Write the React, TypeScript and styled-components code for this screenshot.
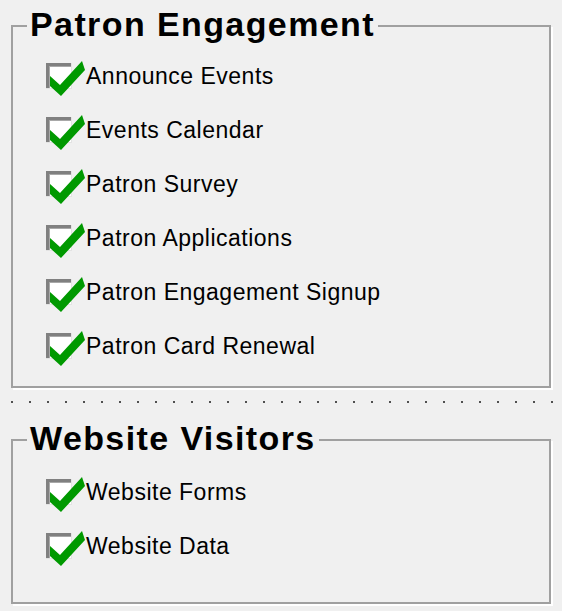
import React from 'react';
import styled, { createGlobalStyle } from 'styled-components';

const GlobalStyle = createGlobalStyle`
  html, body {
    margin: 0;
    padding: 0;
    background: #f0f0f0;
  }
  body {
    font-family: "Liberation Sans", Arial, sans-serif;
    color: #000;
  }
`;

const Page = styled.div`
  width: 562px;
  height: 611px;
  padding: 9px 11px 0;
  box-sizing: border-box;
  overflow: hidden;
`;

const Group = styled.fieldset<{ $padTop: number; $padBottom: number }>`
  margin: 0;
  width: 540px;
  box-sizing: border-box;
  border: 2px solid #a0a0a0;
  box-shadow: 2px 2px 0 #ffffff;
  padding: ${p => p.$padTop}px 0 ${p => p.$padBottom}px 31px;
  min-width: 0;
`;

// the legend sits at the fieldset's left padding, so pull it back
const Title = styled.legend`
  margin-left: -17px;
  padding: 0 3px 4px;
  font-family: "Liberation Sans", Arial, sans-serif;
  font-weight: bold;
  font-size: 34px;
  line-height: 30px;
  letter-spacing: 1.4px;
  color: #000;
`;

const Row = styled.div`
  display: flex;
  align-items: center;
  height: 54px;
`;

const Label = styled.span`
  font-size: 23px;
  letter-spacing: 0.5px;
  line-height: 1;
  color: #000;
`;

const Separator = styled.div`
  height: 2px;
  margin: 13px 0 20px;
  background-image: linear-gradient(to right, #505050 2px, transparent 2px);
  background-size: 18px 2px;
  background-repeat: repeat-x;
  width: 545px;
`;

const CheckIcon = () => (
  <svg width="42" height="40" viewBox="0 0 42 40" style={{ flex: 'none' }}>
    <rect x="2" y="7" width="26" height="26" fill="#ffffff" />
    <path d="M2 7 H28 V10 H5 V33 H2 Z" fill="#808080" />
    <path d="M5 10 H27 V11 H6 V33 H5 Z" fill="#a8a8a8" />
    <path d="M28 7 V33 H2 V32 H27 V7 Z" fill="#e3e3e3" />
    <polygon points="6,20 16,29 38,5 41,14 17,40 6,30" fill="#009900" />
  </svg>
);

const Item = ({ label }: { label: string }) => (
  <Row>
    <CheckIcon />
    <Label>{label}</Label>
  </Row>
);

const patron = [
  'Announce Events',
  'Events Calendar',
  'Patron Survey',
  'Patron Applications',
  'Patron Engagement Signup',
  'Patron Card Renewal'
];

const website = ['Website Forms', 'Website Data'];

export default function App() {
  return (
    <Page>
      <GlobalStyle />
      <Group $padTop={6} $padBottom={13}>
        <Title>Patron Engagement</Title>
        {patron.map(l => (
          <Item key={l} label={l} />
        ))}
      </Group>
      <Separator />
      <Group $padTop={8} $padBottom={29}>
        <Title>Website Visitors</Title>
        {website.map(l => (
          <Item key={l} label={l} />
        ))}
      </Group>
    </Page>
  );
}
